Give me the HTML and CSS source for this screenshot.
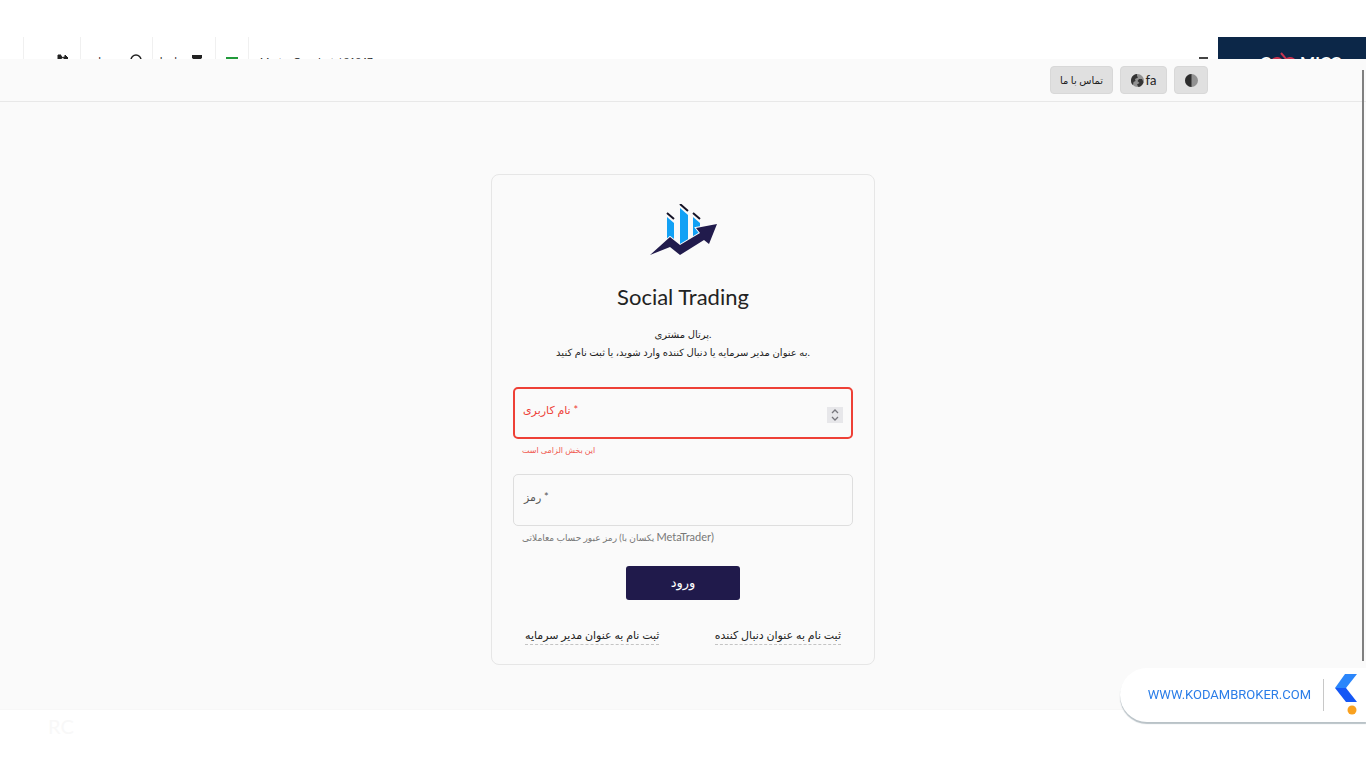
FILE: index.html
```html
<!DOCTYPE html>
<html lang="fa">
<head>
<meta charset="utf-8">
<meta name="viewport" content="width=device-width, initial-scale=1">
<title>Social Trading</title>
<link rel="stylesheet" href="styles.css">
</head>
<body>
<header class="site-bar">
  <nav class="site-tabs">
    <span class="tab tab-exit">خروج <svg class="tab-icon" viewBox="0 0 12 12"><path d="M5 1H2v10h8V8M4 8c0-3 2-5 5-5V1l3 3-3 3V5" fill="#222" stroke="#222"/></svg></span>
    <span class="tab tab-help">پشتیبانی <svg class="tab-icon" viewBox="0 0 12 12"><circle cx="6" cy="6" r="5" fill="none" stroke="#222" stroke-width="1.5"/></svg></span>
    <span class="tab tab-mail">پیام‌ها <svg class="tab-icon" viewBox="0 0 12 12"><path d="M1 1h10v3L6 8 1 4z" fill="#222"/></svg></span>
    <span class="tab tab-flag"><svg width="12" height="10" viewBox="0 0 12 10"><path d="M0 0h12v3H0z" fill="#219a3a"/><path d="M0 7h12v3H0z" fill="#d22"/></svg></span>
    <span class="tab tab-user">Master Omodust / 91947</span>
  </nav>
  <span class="menu-mark"></span>
  <div class="brand">C<span class="brand-red">OO</span> MICC<svg class="brand-leaf" width="9" height="10" viewBox="0 0 9 10"><path d="M1 1l6 7" stroke="#c9344f" stroke-width="2"/></svg></div>
</header>
<main class="portal">
  <div class="toolbar">
    <button class="tool tool-contact" type="button">تماس با ما</button>
    <button class="tool tool-lang" type="button"><svg class="tool-icon" viewBox="0 0 13 13"><circle cx="6.500" cy="6.500" r="6.500" fill="#919191"/><path d="M6 0C2 0 0 4 0 6.500c0 2 .8 3.600 2 4.500l.5-3 2-1-.5-2L7 3.500 6 2zM8 5l3 0 1.500 3c-.5 2.500-2.500 4.800-5 5L6 10.500 8.500 9 6.500 7z" fill="#343434"/></svg><span>fa</span></button>
    <button class="tool tool-theme" type="button" aria-label="تم"><svg class="tool-icon" viewBox="0 0 13 13"><circle cx="6.500" cy="6.500" r="6.500" fill="#929292"/><path d="M6.500 0a6.500 6.500 0 0 0 0 13z" fill="#2c2c2c"/></svg></button>
  </div>
  <div class="stage">
    <form class="card">
      <svg class="logo" width="68" height="54" viewBox="0 0 68 54">
        <g fill="#12a1f5"><path d="M18 13l7 6v19l-7 2z"/><path d="M31 4l8 7v33h-8z"/><path d="M44 13l7 6v8l-7 8z"/></g>
        <g stroke="#151326" stroke-width="2"><path d="M18 9l7 6M31 0l8 7M44 9l7 6"/></g>
        <path d="M1 51L21 33l10 8 20-12-4-5 21-4-8 20-5-4-24 15-10-8z" fill="#211b4c" stroke="#fafafa" stroke-width="2" paint-order="stroke"/>
      </svg>
      <h1 class="title">Social Trading</h1>
      <p class="intro">پرتال مشتری.<br>به عنوان مدیر سرمایه یا دنبال کننده وارد شوید، یا ثبت نام کنید.</p>
      <div class="field field-error">
        <label class="label" for="user">نام کاربری *</label>
        <input class="input" id="user" type="number" aria-describedby="user-note">
        <svg class="spinner" width="16" height="16" viewBox="0 0 16 16"><path d="M5 6L8 3l3 3M5 10l3 3 3-3" fill="none" stroke="#77777d" stroke-width="1.300"/></svg>
      </div>
      <p class="note note-error" id="user-note">این بخش الزامی است</p>
      <div class="field">
        <label class="label" for="pass">رمز *</label>
        <input class="input" id="pass" type="password" aria-describedby="pass-note">
      </div>
      <p class="note" id="pass-note">رمز عبور حساب معاملاتی (یکسان با <span class="latin">MetaTrader)</span></p>
      <button class="submit" type="button">ورود</button>
      <div class="links">
        <a class="link" href="#">ثبت نام به عنوان مدیر سرمایه</a>
        <a class="link" href="#">ثبت نام به عنوان دنبال کننده</a>
      </div>
    </form>
  </div>
  <span class="scrollbar"></span>
</main>
<footer class="site-foot">RC</footer>
<a class="badge" href="#">
  <span class="badge-text">WWW.KODAMBROKER.COM</span>
  <svg width="22" height="42" viewBox="0 0 22 42"><path d="M10 0h12L11 14H0z" fill="#2b86fb"/><path d="M0 14h11l11 14H11z" fill="#1557f5"/><circle cx="17" cy="36" r="4.500" fill="#f9a11f"/></svg>
</a>
</body>
</html>
```
FILE: styles.css
```css
* { box-sizing: border-box; }
body {
  margin: 0;
  min-height: 100vh;
  display: flex;
  flex-direction: column;
  background: #fff;
  color: #222;
  font-family: Lato, "DejaVu Sans", sans-serif;
  font-size: 12px;
}
button, input { font: inherit; color: inherit; }
.site-bar {
  height: 59px;
  padding: 37px 0 0 23px;
  overflow: hidden;
  display: flex;
  align-items: flex-start;
}
.site-tabs { display: flex; flex: 1; }
.tab {
  display: flex;
  justify-content: flex-end;
  gap: 8px;
  height: 40px;
  padding: 16px 12px 0 0;
  border-left: 1px solid #f0f0f0;
  white-space: nowrap;
  line-height: 16px;
  font-size: 10px;
}
.tab-icon { flex: none; width: 12px; height: 12px; margin-top: 1px; }
.tab-exit { width: 57px; }
.tab-help { width: 72px; padding-right: 10px; }
.tab-mail { width: 63px; }
.tab-flag { width: 33px; padding-top: 20px; padding-right: 10px; }
.tab-user { padding-left: 11px; }
.menu-mark { width: 9px; height: 2px; margin: 20px 10px 0 0; background: #444; }
.brand {
  position: relative;
  width: 148px;
  height: 40px;
  padding: 15px 0 0 42px;
  background: #0c2748;
  color: #fff;
  font-size: 16px;
  font-weight: 700;
  line-height: 20px;
  white-space: nowrap;
}
.brand-red { color: #c9344f; }
.brand-leaf { position: absolute; left: 62px; top: 15px; }
.portal {
  position: relative;
  flex: 1;
  display: flex;
  flex-direction: column;
  background: #fafafa;
}
.toolbar {
  height: 43px;
  padding: 7px 158px 7px 0;
  display: flex;
  justify-content: flex-end;
  gap: 7px;
  border-bottom: 1px solid #e8e8e8;
}
.tool {
  height: 28px;
  padding: 0;
  border: 1px solid #d8d8d8;
  border-radius: 4px;
  background: #e0e0e0;
  display: flex;
  align-items: center;
  justify-content: center;
  gap: 2px;
}
.tool-contact { width: 63px; font-size: 10px; white-space: nowrap; }
.tool-lang { width: 47px; font-size: 13px; }
.tool-theme { width: 34px; }
.tool-icon { width: 13px; height: 13px; }
.stage { flex: 1; display: flex; justify-content: center; align-items: flex-start; padding: 72px 16px 44px; }
.card {
  width: 100%;
  max-width: 384px;
  padding: 29px 21px 19px;
  border: 1px solid #e6e6e6;
  border-radius: 8px;
  display: flex;
  flex-direction: column;
}
.logo { align-self: center; }
.title { margin: 25px 0 0; font-size: 22px; font-weight: 400; line-height: 28px; text-align: center; }
.intro { margin: 14px 0 26px; font-size: 10px; line-height: 18px; text-align: center; }
.field {
  display: grid;
  align-items: center;
  height: 52px;
  border: 1px solid #dedede;
  border-radius: 5px;
}
.field > * { grid-area: 1 / 1; }
.field-error { border: 2px solid #ee4036; }
.label { padding: 0 10px 6px; font-size: 11px; line-height: 16px; color: #555; }
.field-error .label { padding: 0 8px 6px; color: #ee4036; }
.input {
  width: 100%;
  height: 100%;
  padding: 0 32px 0 10px;
  border: 0;
  outline: 0;
  background: transparent;
  appearance: textfield;
}
.input::-webkit-inner-spin-button { appearance: none; margin: 0; }
.spinner { justify-self: end; margin: 4px 8px 0 0; background: #e7e7ea; }
.note { margin: 3px 0 0; padding: 0 9px; font-size: 9px; line-height: 16px; color: #777; }
.note-error { margin: 3px 0 16px; font-size: 8px; color: #f0584f; }
.latin { font-size: 11px; }
.submit {
  align-self: center;
  width: 114px;
  height: 34px;
  margin-top: 20px;
  padding: 0 0 2px;
  border: 0;
  border-radius: 3px;
  background: #201a4b;
  color: #fff;
  font-size: 13px;
}
.links { display: flex; justify-content: space-between; margin-top: 26px; padding: 0 12px; }
.link {
  border-bottom: 1px dashed #c4c4c4;
  color: #222;
  font-size: 11px;
  line-height: 18px;
  text-decoration: none;
  white-space: nowrap;
}
.scrollbar { position: absolute; right: 2px; top: 11px; bottom: 48px; width: 2px; background: #808080; }
.site-foot {
  height: 59px;
  padding: 4px 48px;
  border-top: 1px solid #f7f7f7;
  color: #f8f8f8;
  font-size: 20px;
  line-height: 24px;
}
.badge {
  position: fixed;
  right: 0;
  bottom: 46px;
  height: 54px;
  padding: 0 9px 0 28px;
  border-radius: 27px 0 0 27px;
  background: #fff;
  box-shadow: 0 2px 1px #b9c2c7;
  display: flex;
  align-items: center;
  gap: 11px;
  color: #2a7de8;
  font-family: Roboto, sans-serif;
  font-size: 13px;
  text-decoration: none;
}
.badge-text { padding-right: 12px; border-right: 1px solid #c8c8c8; line-height: 32px; }
```
